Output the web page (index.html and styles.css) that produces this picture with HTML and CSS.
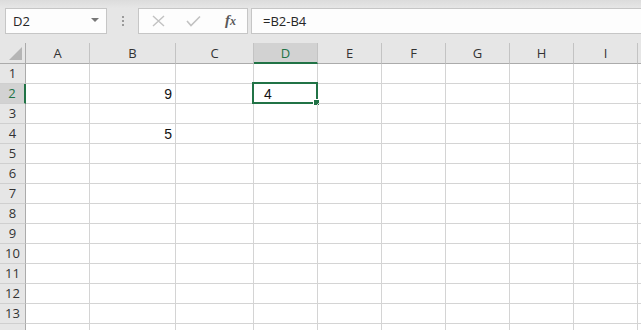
FILE: index.html
```html
<!DOCTYPE html>
<html lang="en">
<head>
    <meta charset="UTF-8">
    <title>Sheet</title>
    <link rel="stylesheet" href="styles.css">
</head>
<body>
    <!-- Formula bar -->
    <div class="toolbar">
        <div class="namebox">
            <span>D2</span>
            <span class="caret"></span>
        </div>
        <div class="grip"><i></i><i></i><i></i></div>
        <div class="fbuttons">
            <svg class="ico" width="13" height="12" viewBox="0 0 13 12">
                <path d="M1 1 L12 11 M12 1 L1 11" stroke="#c2c2c2" stroke-width="1.4" fill="none"/>
            </svg>
            <svg class="ico" width="15" height="12" viewBox="0 0 15 12">
                <path d="M1 6 L5 10.5 L14 1.5" stroke="#c2c2c2" stroke-width="1.6" fill="none"/>
            </svg>
            <span class="fx">f<span class="fx-x">x</span></span>
        </div>
        <div class="formula">=B2-B4</div>
    </div>

    <!-- Grid -->
    <div class="sheet">
        <div class="corner"><span class="tri"></span></div>
        <div class="colhead">A</div>
        <div class="colhead">B</div>
        <div class="colhead">C</div>
        <div class="colhead active">D</div>
        <div class="colhead">E</div>
        <div class="colhead">F</div>
        <div class="colhead">G</div>
        <div class="colhead">H</div>
        <div class="colhead">I</div>
        <div class="colhead"></div>
    </div>
    <div class="sheet rows" id="rows"></div>

    <script>
        const rows = document.getElementById('rows');
        const values = { '2-B': '9', '4-B': '5', '2-D': '4' };
        const cols = ['A', 'B', 'C', 'D', 'E', 'F', 'G', 'H', 'I', 'J'];

        for (let r = 1; r <= 14; r++) {
            const head = document.createElement('div');
            head.className = 'rowhead' + (r === 2 ? ' active' : '');
            // last row is only partly in view, its number is hidden
            head.textContent = r < 14 ? r : '';
            rows.appendChild(head);

            cols.forEach(c => {
                const cell = document.createElement('div');
                cell.className = 'cell';
                const v = values[r + '-' + c];
                if (v) {
                    cell.textContent = v;
                    cell.classList.add(c === 'D' ? 'left' : 'num');
                }
                if (r === 2 && c === 'D') {
                    const sel = document.createElement('div');
                    sel.className = 'selection';
                    sel.innerHTML = '<span class="handle"></span>';
                    cell.appendChild(sel);
                }
                rows.appendChild(cell);
            });
        }
    </script>
</body>
</html>
```

FILE: styles.css
```css
body {
    margin: 0;
    background-color: #ffffff;
    font-family: "Open Sans", "Noto Sans", Arial, sans-serif;
    overflow: hidden;
    width: 641px;
    height: 330px;
}

/* Formula bar */
.toolbar {
    display: flex;
    align-items: flex-start;
    height: 43px;
    padding: 8px 0 0 5px;
    box-sizing: border-box;
    background: linear-gradient(#dcdcdc, #e6e6e6 8px);
}

.namebox {
    display: flex;
    align-items: center;
    justify-content: space-between;
    width: 102px;
    height: 26px;
    box-sizing: border-box;
    padding: 0 7px 0 7px;
    background-color: #fdfdfd;
    border: 1px solid #c6c6c6;
    font-size: 13px;
    color: #262626;
}

.caret {
    width: 0;
    height: 0;
    border-left: 4px solid transparent;
    border-right: 4px solid transparent;
    border-top: 4px solid #777;
    margin-top: -3px;
}

.grip {
    display: flex;
    flex-direction: column;
    gap: 2px;
    width: 31px;
    align-items: center;
    padding-top: 8px;
}

.grip i {
    width: 2px;
    height: 2px;
    background-color: #9a9a9a;
}

.fbuttons {
    display: flex;
    align-items: center;
    width: 110px;
    height: 26px;
    box-sizing: border-box;
    padding: 0 0 0 13px;
    background-color: #fdfdfd;
    border: 1px solid #c6c6c6;
}

.ico {
    margin-right: 19px;
}

.ico + .ico {
    margin-left: 2px;
}

.fx {
    font-family: "Liberation Serif", "DejaVu Serif", serif;
    font-style: italic;
    font-weight: bold;
    font-size: 15px;
    color: #5a5a5a;
    margin-left: 5px;
    margin-top: -2px;
}

.fx-x {
    font-size: 12px;
}

.formula {
    flex: 1;
    height: 26px;
    box-sizing: border-box;
    margin-left: 3px;
    padding: 3px 0 0 11px;
    background-color: #fdfdfd;
    border: 1px solid #c6c6c6;
    border-right: none;
    font-size: 13px;
    color: #262626;
}

/* Grid */
.sheet {
    display: grid;
    grid-template-columns: 26px 64px 86px 78px 64px 64px 64px 64px 64px 64px 64px;
}

.corner,
.colhead {
    height: 21px;
    box-sizing: border-box;
    background-color: #e6e6e6;
    border-bottom: 1px solid #ababab;
}

.corner {
    position: relative;
    border-right: 1px solid #ababab;
}

.tri {
    position: absolute;
    right: 3px;
    bottom: 3px;
    width: 0;
    height: 0;
    border-left: 13px solid transparent;
    border-bottom: 13px solid #b5b5b5;
}

.colhead {
    border-right: 1px solid #c3c3c3;
    font-size: 13px;
    line-height: 20px;
    text-align: center;
    color: #333;
}

.colhead.active {
    background-color: #d2d2d2;
    color: #217346;
    border-bottom: 2px solid #217346;
}

.rows {
    grid-auto-rows: 20px;
}

.rowhead {
    box-sizing: border-box;
    background-color: #e6e6e6;
    border-right: 1px solid #ababab;
    border-bottom: 1px solid #cfcfcf;
    font-size: 13px;
    line-height: 19px;
    text-align: center;
    color: #333;
}

.rowhead.active {
    background-color: #d2d2d2;
    color: #217346;
    border-right: 2px solid #217346;
}

.cell {
    position: relative;
    box-sizing: border-box;
    border-right: 1px solid #d4d4d4;
    border-bottom: 1px solid #d4d4d4;
    font-family: "Liberation Sans", Arial, sans-serif;
    font-size: 14px;
    line-height: 20px;
    color: #111;
}

.num {
    text-align: right;
    padding-right: 3px;
}

.left {
    padding-left: 10px;
}

/* Active cell outline */
.selection {
    position: absolute;
    left: -2px;
    top: -2px;
    right: -1px;
    bottom: -1px;
    border: 2px solid #217346;
}

.handle {
    position: absolute;
    right: -4px;
    bottom: -4px;
    width: 5px;
    height: 5px;
    background-color: #217346;
    border: 1px solid #ffffff;
}
```
